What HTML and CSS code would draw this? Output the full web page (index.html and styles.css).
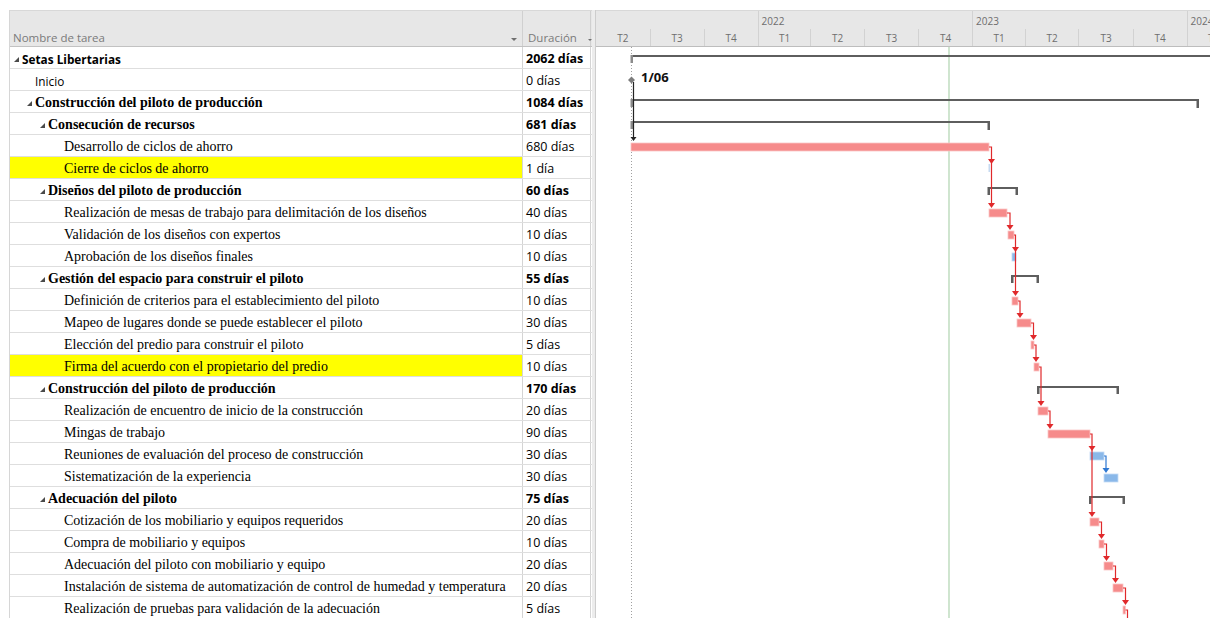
FILE: index.html
```html
<!DOCTYPE html>
<html lang="es">
<head>
<meta charset="utf-8">
<title>Setas Libertarias - Diagrama de Gantt</title>
<link rel="stylesheet" href="styles.css">
</head>
<body>
<div class="app">
  <div class="table">
    <div class="thead">
      <div class="th th-name">Nombre de tarea<span class="caret"></span></div>
      <div class="th th-dur">Duración<span class="caret"></span></div>
    </div>
    <div class="row"><div class="name sans b l0"><span class="tog"></span>Setas Libertarias</div><div class="dur b">2062 días</div></div>
    <div class="row"><div class="name sans leaf1">Inicio</div><div class="dur">0 días</div></div>
    <div class="row"><div class="name serif b l1"><span class="tog"></span>Construcción del piloto de producción</div><div class="dur b">1084 días</div></div>
    <div class="row"><div class="name serif b l2"><span class="tog"></span>Consecución de recursos</div><div class="dur b">681 días</div></div>
    <div class="row"><div class="name serif leaf3">Desarrollo de ciclos de ahorro</div><div class="dur">680 días</div></div>
    <div class="row"><div class="name serif leaf3 hl">Cierre de ciclos de ahorro</div><div class="dur">1 día</div></div>
    <div class="row"><div class="name serif b l2"><span class="tog"></span>Diseños del piloto de producción</div><div class="dur b">60 días</div></div>
    <div class="row"><div class="name serif leaf3">Realización de mesas de trabajo para delimitación de los diseños</div><div class="dur">40 días</div></div>
    <div class="row"><div class="name serif leaf3">Validación de los diseños con expertos</div><div class="dur">10 días</div></div>
    <div class="row"><div class="name serif leaf3">Aprobación de los diseños finales</div><div class="dur">10 días</div></div>
    <div class="row"><div class="name serif b l2"><span class="tog"></span>Gestión del espacio para construir el piloto</div><div class="dur b">55 días</div></div>
    <div class="row"><div class="name serif leaf3">Definición de criterios para el establecimiento del piloto</div><div class="dur">10 días</div></div>
    <div class="row"><div class="name serif leaf3">Mapeo de lugares donde se puede establecer el piloto</div><div class="dur">30 días</div></div>
    <div class="row"><div class="name serif leaf3">Elección del predio para construir el piloto</div><div class="dur">5 días</div></div>
    <div class="row"><div class="name serif leaf3 hl">Firma del acuerdo con el propietario del predio</div><div class="dur">10 días</div></div>
    <div class="row"><div class="name serif b l2"><span class="tog"></span>Construcción del piloto de producción</div><div class="dur b">170 días</div></div>
    <div class="row"><div class="name serif leaf3">Realización de encuentro de inicio de la construcción</div><div class="dur">20 días</div></div>
    <div class="row"><div class="name serif leaf3">Mingas de trabajo</div><div class="dur">90 días</div></div>
    <div class="row"><div class="name serif leaf3">Reuniones de evaluación del proceso de construcción</div><div class="dur">30 días</div></div>
    <div class="row"><div class="name serif leaf3">Sistematización de la experiencia</div><div class="dur">30 días</div></div>
    <div class="row"><div class="name serif b l2"><span class="tog"></span>Adecuación del piloto</div><div class="dur b">75 días</div></div>
    <div class="row"><div class="name serif leaf3">Cotización de los mobiliario y equipos requeridos</div><div class="dur">20 días</div></div>
    <div class="row"><div class="name serif leaf3">Compra de mobiliario y equipos</div><div class="dur">10 días</div></div>
    <div class="row"><div class="name serif leaf3">Adecuación del piloto con mobiliario y equipo</div><div class="dur">20 días</div></div>
    <div class="row"><div class="name serif leaf3">Instalación de sistema de automatización de control de humedad y temperatura</div><div class="dur">20 días</div></div>
    <div class="row"><div class="name serif leaf3">Realización de pruebas para validación de la adecuación</div><div class="dur">5 días</div></div>
  </div>

  <div class="splitter"></div>

  <div class="gantt">
    <div class="timescale">
      <div class="years">
        <div class="yr y2021"></div>
        <div class="yr y-full">2022</div>
        <div class="yr y-full">2023</div>
        <div class="yr y-rest">2024</div>
      </div>
      <div class="quarters">
        <div class="q q2 first">T2</div>
        <div class="q q3">T3</div>
        <div class="q q4">T4</div>
        <div class="q q1">T1</div>
        <div class="q q2">T2</div>
        <div class="q q3">T3</div>
        <div class="q q4">T4</div>
        <div class="q q1">T1</div>
        <div class="q q2">T2</div>
        <div class="q q3">T3</div>
        <div class="q q4">T4</div>
        <div class="q q-rest">T1</div>
      </div>
    </div>

    <svg class="chart" width="615" height="571" viewBox="595 47 615 571" xmlns="http://www.w3.org/2000/svg">
      <!-- project start and status date -->
      <line x1="630.5" y1="47" x2="630.5" y2="618" stroke="#a0a0a0" stroke-width="1" stroke-dasharray="1 2"/>
      <line x1="948" y1="47" x2="948" y2="618" stroke="#c4dfc4" stroke-width="1.6"/>

      <!-- summary bars -->
      <g fill="#5e5e5e">
        <rect x="630" y="55" width="585" height="2"/>
        <rect x="630" y="99" width="568" height="2"/>
        <rect x="1195.5" y="99" width="2.5" height="9"/>
        <rect x="630" y="121" width="359" height="2"/>
        <rect x="986.5" y="121" width="2.5" height="9"/>
        <rect x="987" y="187" width="30" height="2"/>
        <rect x="986.5" y="187" width="2.5" height="8"/>
        <rect x="1014.5" y="187" width="2.5" height="8"/>
        <rect x="1010" y="275" width="28" height="2"/>
        <rect x="1010" y="275" width="2.5" height="8"/>
        <rect x="1035.5" y="275" width="2.5" height="8"/>
        <rect x="1036" y="386" width="82" height="2"/>
        <rect x="1036" y="386" width="2.5" height="8"/>
        <rect x="1115.5" y="386" width="2.5" height="8"/>
        <rect x="1088" y="496" width="36" height="2"/>
        <rect x="1088" y="496" width="2.5" height="8"/>
        <rect x="1121.5" y="496" width="2.5" height="8"/>
      </g>
      <g fill="#8c8c8c">
        <rect x="629.5" y="55" width="2.5" height="8"/>
        <rect x="629.5" y="99" width="2.5" height="8"/>
        <rect x="629.5" y="121" width="2.5" height="8"/>
      </g>

      <!-- milestone -->
      <polygon points="630.5,76.5 634,80 630.5,83.5 627,80" fill="#7c7c7c"/>
      <text x="640" y="82" class="ms-label">1/06</text>
      <line x1="632.5" y1="82" x2="632.5" y2="138" stroke="#222" stroke-width="1.2"/>
      <polygon points="629.5,137 635.5,137 632.5,141" fill="#222"/>

      <!-- critical tasks -->
      <g fill="#f68b8b" stroke="#fbc6c6" stroke-width="0.8">
        <rect x="630" y="143" width="358" height="8"/>
        <rect x="988" y="209" width="18" height="8"/>
        <rect x="1007" y="231" width="6" height="8"/>
        <rect x="1011" y="297" width="6" height="8"/>
        <rect x="1016" y="319" width="14" height="8"/>
        <rect x="1030" y="341" width="3" height="8"/>
        <rect x="1033" y="363" width="5" height="8"/>
        <rect x="1037" y="407" width="10" height="8"/>
        <rect x="1047" y="430" width="42" height="8"/>
        <rect x="1089" y="518" width="9" height="8"/>
        <rect x="1098" y="540" width="5" height="8"/>
        <rect x="1103" y="562" width="9" height="8"/>
        <rect x="1112" y="584" width="10" height="8"/>
        <rect x="1122" y="606" width="2.5" height="8"/>
      </g>

      <!-- non-critical tasks -->
      <rect x="987.5" y="164" width="1.6" height="8" fill="#c6daf1"/>
      <g fill="#8ab8e9" stroke="#c3dbf4" stroke-width="0.8">
        <rect x="1011" y="253" width="4" height="8"/>
        <rect x="1089" y="452" width="14" height="8"/>
        <rect x="1103" y="474" width="14" height="8"/>
      </g>

      <!-- critical links -->
      <g fill="none" stroke="#e0292b" stroke-width="1.2">
        <polyline points="988,147 990.5,147 990.5,204"/>
        <polyline points="1006,213 1009,213 1009,226"/>
        <polyline points="1013,235 1014.5,235 1014.5,292"/>
        <polyline points="1017,301 1019,301 1019,314"/>
        <polyline points="1030,323 1032.5,323 1032.5,336"/>
        <polyline points="1033,345 1035,345 1035,358"/>
        <polyline points="1038,367 1040,367 1040,402"/>
        <polyline points="1047,411 1049,411 1049,425"/>
        <polyline points="1089,434 1091,434 1091,513"/>
        <polyline points="1098,522 1100.5,522 1100.5,535"/>
        <polyline points="1103,544 1105.5,544 1105.5,557"/>
        <polyline points="1112,566 1114.5,566 1114.5,579"/>
        <polyline points="1122,588 1124.5,588 1124.5,601"/>
        <polyline points="1124.5,610 1126.5,610 1126.5,620"/>
      </g>
      <g fill="#e0292b">
        <polygon points="987,159 994,159 990.5,164"/>
        <polygon points="987,203 994,203 990.5,208"/>
        <polygon points="1005.5,225 1012.5,225 1009,230"/>
        <polygon points="1011,247 1018,247 1014.5,252"/>
        <polygon points="1011,291 1018,291 1014.5,296"/>
        <polygon points="1015.5,313 1022.5,313 1019,318"/>
        <polygon points="1029,335 1036,335 1032.5,340"/>
        <polygon points="1031.5,357 1038.5,357 1035,362"/>
        <polygon points="1036.5,401 1043.5,401 1040,406"/>
        <polygon points="1045.5,424 1052.5,424 1049,429"/>
        <polygon points="1087.5,446 1094.5,446 1091,451"/>
        <polygon points="1087.5,512 1094.5,512 1091,517"/>
        <polygon points="1097,534 1104,534 1100.5,539"/>
        <polygon points="1102,556 1109,556 1105.5,561"/>
        <polygon points="1111,578 1118,578 1114.5,583"/>
        <polygon points="1121,600 1128,600 1124.5,605"/>
      </g>

      <!-- non-critical link -->
      <polyline points="1103,456 1105,456 1105,469" fill="none" stroke="#2f78d2" stroke-width="1.2"/>
      <polygon points="1101.5,468 1108.5,468 1105,473" fill="#2f78d2"/>
    </svg>
  </div>
</div>
</body>
</html>
```

FILE: styles.css
```css
html, body {
  margin: 0;
  padding: 0;
  background: #ffffff;
}

body {
  font-family: "Open Sans", "Noto Sans", sans-serif;
  color: #000;
  overflow: hidden;
}

.app {
  display: flex;
  align-items: flex-start;
  padding: 10px 0 0 9px;
  height: 608px;
  overflow: hidden;
}

/* ---- task sheet ---- */
.table {
  flex: none;
  width: 582px;
  border-left: 1px solid #d6d6d6;
}

.thead {
  display: flex;
  height: 35px;
  background: #e7e7e7;
  border-top: 1px solid #d8d8d8;
  border-bottom: 1px solid #c2c2c2;
}

.th {
  position: relative;
  box-sizing: border-box;
  display: flex;
  align-items: flex-end;
  padding: 0 0 0 3px;
  font-size: 11.5px;
  line-height: 16px;
  color: #7a7a7a;
  border-right: 1px solid #d0d0d0;
}

.th-name {
  width: 513px;
}

.th-dur {
  width: 68px;
  padding-left: 5px;
}

.caret {
  position: absolute;
  bottom: 5px;
  width: 0;
  height: 0;
  border-style: solid;
  border-width: 3px 3.5px 0 3.5px;
  border-color: #6f6f6f transparent transparent transparent;
}

.th-name .caret {
  right: 5px;
}

.th-dur .caret {
  right: -2px;
  border-width: 2px 2px 0 2px;
}

.row {
  display: flex;
  height: 22px;
  box-sizing: border-box;
  border-bottom: 1px solid #dedede;
}

.name,
.dur {
  box-sizing: border-box;
  display: flex;
  align-items: center;
  padding-top: 2px;
  white-space: nowrap;
  overflow: hidden;
  line-height: 18px;
}

.name {
  width: 513px;
  border-right: 1px solid #d4d4d4;
}

.dur {
  width: 68px;
  padding-left: 3px;
  font-size: 12.5px;
  border-right: 1px solid #d4d4d4;
}

.sans {
  font-family: "Open Sans", "Noto Sans", sans-serif;
  font-size: 11.8px;
}

.serif {
  font-family: "Liberation Serif", "Times New Roman", serif;
  font-size: 14px;
}

.b {
  font-weight: bold;
}

.hl {
  background: #ffff00;
}

.l0 { padding-left: 4px; }
.l1 { padding-left: 17px; }
.l2 { padding-left: 30px; }
.leaf1 { padding-left: 25px; }
.leaf3 { padding-left: 54px; }

/* outline expand marker */
.tog {
  flex: none;
  width: 0;
  height: 0;
  margin-right: 3px;
  margin-top: 1px;
  border-style: solid;
  border-width: 0 0 5px 5px;
  border-color: transparent transparent #4a4a4a transparent;
}

/* ---- divider between sheet and chart ---- */
.splitter {
  flex: none;
  width: 3px;
  height: 608px;
  background: #ececec;
  border-right: 1px solid #cdcdcd;
}

/* ---- gantt chart ---- */
.gantt {
  flex: 1;
  min-width: 0;
  overflow: hidden;
}

.timescale {
  height: 35px;
  background: #e7e7e7;
  border-top: 1px solid #d8d8d8;
  border-bottom: 1px solid #bdbdbd;
  font-size: 10px;
  color: #6e6e6e;
}

.years,
.quarters {
  display: flex;
  white-space: nowrap;
}

.years {
  height: 18px;
}

.quarters {
  height: 17px;
}

.yr {
  flex: none;
  box-sizing: border-box;
  padding: 3px 0 0 3px;
  line-height: 14px;
  border-left: 1px solid #d2d2d2;
}

.y2021 {
  width: 161.6px;
  border-left: none;
}

.y-full {
  width: 214.5px;
}

.y-rest {
  width: 60px;
}

.q {
  flex: none;
  box-sizing: border-box;
  text-align: center;
  line-height: 18px;
  border-left: 1px solid #d2d2d2;
}

.q.first {
  border-left: none;
}

.q1 { width: 52.9px; }
.q2 { width: 53.5px; }
.q3 { width: 54.1px; }
.q4 { width: 54.0px; }
.q-rest { width: 52.9px; }

.chart {
  display: block;
}

.ms-label {
  font-family: "Open Sans", "Noto Sans", sans-serif;
  font-size: 13px;
  font-weight: bold;
  fill: #111;
}
```
